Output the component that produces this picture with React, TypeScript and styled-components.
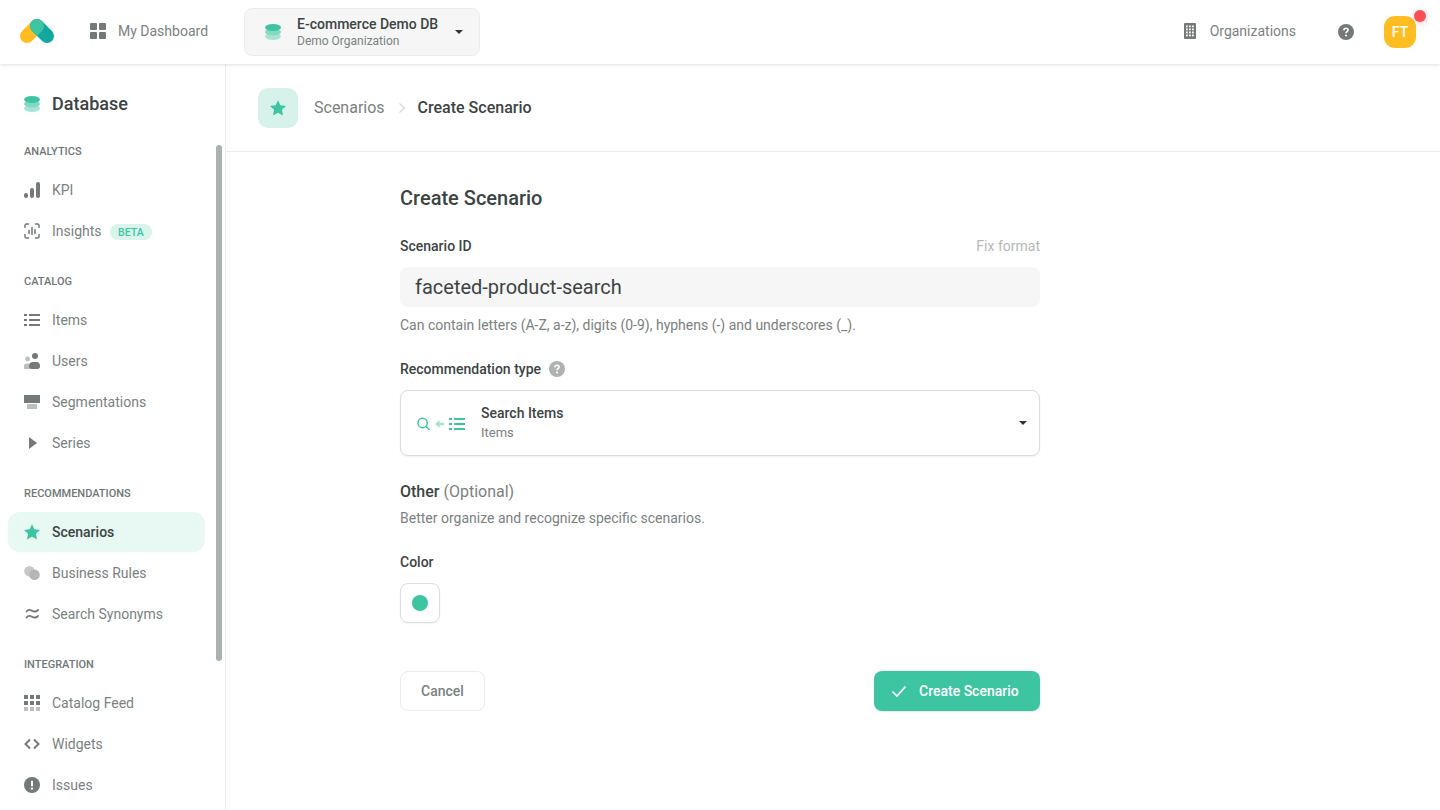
import React from 'react';
import styled, { createGlobalStyle } from 'styled-components';

const GlobalStyle = createGlobalStyle`
  html, body {
    margin: 0;
    height: 100%;
    overflow: hidden;
    background: #fff;
    font-family: Roboto, 'Liberation Sans', sans-serif;
    color: #3c4443;
    -webkit-font-smoothing: antialiased;
  }
  * {
    box-sizing: border-box;
  }
`;

const Page = styled.div`
  height: 810px;
  display: flex;
  flex-direction: column;
  overflow: hidden;
`;

/* Top bar */
const TopBar = styled.header`
  position: relative;
  z-index: 2;
  flex: 0 0 64px;
  height: 64px;
  display: flex;
  align-items: center;
  padding: 0 24px 0 20px;
  background: #fff;
  box-shadow: 0 1px 3px rgba(0, 0, 0, 0.12);
`;

const TopLink = styled.div<{ $gap: number }>`
  display: flex;
  align-items: center;
  gap: ${(p) => p.$gap}px;
  margin-bottom: 2px;
  font-size: 14px;
  color: #7a8280;
`;

const DashLink = styled(TopLink)`
  margin-left: 36px;
`;

const DbSwitch = styled.div`
  margin-left: 36px;
  width: 236px;
  height: 48px;
  display: flex;
  align-items: center;
  padding: 0 16px 0 20px;
  background: #f6f6f6;
  border: 1px solid #ececec;
  border-radius: 8px;
`;

const DbText = styled.div`
  margin-left: 16px;
  flex: 1;
  display: flex;
  flex-direction: column;
  gap: 1px;
`;

const DbName = styled.div`
  font-size: 14px;
  line-height: 17px;
  font-weight: 500;
  color: #3c4443;
`;

const DbOrg = styled.div`
  font-size: 12px;
  line-height: 15px;
  color: #7a8280;
`;

const Caret = styled.span`
  width: 0;
  height: 0;
  border-left: 4.5px solid transparent;
  border-right: 4.5px solid transparent;
  border-top: 4.5px solid #2f3635;
`;

const TopRight = styled.div`
  margin-left: auto;
  display: flex;
  align-items: center;
`;

const HelpButton = styled.div`
  margin-left: 42px;
  display: flex;
`;

const Avatar = styled.div`
  position: relative;
  margin-left: 30px;
  width: 32px;
  height: 32px;
  display: flex;
  align-items: center;
  justify-content: center;
  border-radius: 11px;
  background: #ffbd21;
  color: #fff;
  font-size: 14px;
  font-weight: 500;
`;

const Badge = styled.span`
  position: absolute;
  top: -6px;
  right: -10px;
  width: 12px;
  height: 12px;
  border-radius: 50%;
  background: #ff4d54;
  box-shadow: 0 2px 6px rgba(255, 77, 84, 0.3);
`;

/* Layout */
const Body = styled.div`
  flex: 1;
  display: flex;
  min-height: 0;
`;

const Sidebar = styled.aside`
  position: relative;
  flex: 0 0 226px;
  padding: 0 8px;
  border-right: 1px solid #ececec;
  overflow: hidden;
`;

const Scrollbar = styled.div`
  position: absolute;
  top: 81px;
  left: 216px;
  width: 6px;
  height: 516px;
  border-radius: 3px;
  background: #a9b2af;
`;

const SideTitle = styled.div`
  height: 80px;
  display: flex;
  align-items: center;
  gap: 12px;
  padding-left: 16px;
`;

const SideName = styled.span`
  margin-bottom: 2px;
  font-size: 18px;
  font-weight: 500;
  color: #3c4443;
`;

const Group = styled.div`
  margin-bottom: 23px;
`;

const GroupLabel = styled.div`
  height: 14px;
  margin-bottom: 12px;
  padding-left: 16px;
  display: flex;
  align-items: center;
  font-size: 11px;
  font-weight: 500;
  color: #6f7776;
`;

const NavRow = styled.div<{ $active?: boolean }>`
  width: 197px;
  height: 40px;
  margin-bottom: 1px;
  display: flex;
  align-items: center;
  gap: 12px;
  padding-left: 16px;
  border-radius: 12px;
  font-size: 14px;
  background: ${(p) => (p.$active ? '#e8f8f3' : 'transparent')};
  color: ${(p) => (p.$active ? '#3c4443' : '#7a8280')};
  font-weight: ${(p) => (p.$active ? 500 : 400)};
`;

const BetaTag = styled.span`
  margin: 2px 0 0 -4px;
  height: 16px;
  padding: 0 8.5px;
  display: flex;
  align-items: center;
  border-radius: 8px;
  background: #d9f4ec;
  color: #3dc5a2;
  font-size: 10.5px;
  font-weight: 500;
`;

/* Main column */
const Main = styled.main`
  flex: 1;
  min-width: 0;
`;

const Crumbs = styled.div`
  height: 88px;
  display: flex;
  align-items: center;
  padding: 0 32px;
  border-bottom: 1px solid #ececec;
  font-size: 16px;
`;

const CrumbTile = styled.div`
  width: 40px;
  height: 40px;
  display: flex;
  align-items: center;
  justify-content: center;
  margin-right: 16px;
  border-radius: 10px;
  background: #d6f2ea;
`;

const CrumbLink = styled.span`
  color: #7a8280;
`;

const CrumbCurrent = styled.span`
  font-weight: 500;
  color: #3c4443;
`;

const CrumbSep = styled.span`
  display: flex;
  margin: 0 12px 0 13px;
`;

const Form = styled.form`
  width: 640px;
  margin-left: 174px;
  padding-top: 32px;
`;

const FormTitle = styled.h1`
  margin: 0;
  height: 28px;
  line-height: 28px;
  font-size: 20px;
  font-weight: 500;
  color: #3c4443;
`;

const LabelRow = styled.div<{ $top: number }>`
  margin-top: ${(p) => p.$top}px;
  height: 20px;
  display: flex;
  align-items: center;
  gap: 8px;
`;

const FieldLabel = styled.label`
  font-size: 14px;
  font-weight: 500;
  color: #3c4443;
`;

const FixFormat = styled.span`
  margin-left: auto;
  font-size: 14px;
  color: #b4b9b8;
`;

const TextInput = styled.div`
  margin-top: 11px;
  height: 40px;
  display: flex;
  align-items: center;
  padding: 0 15px;
  border-radius: 8px;
  background: #f6f6f6;
  font-size: 20px;
  color: #3c4443;
`;

const Hint = styled.div<{ $top: number }>`
  margin-top: ${(p) => p.$top}px;
  height: 20px;
  line-height: 20px;
  font-size: 14px;
  color: #7a8280;
`;

const Select = styled.div`
  margin-top: 11px;
  height: 66px;
  display: flex;
  align-items: center;
  padding: 0 12px 0 16px;
  border: 1px solid #d9dcdb;
  border-radius: 8px;
  box-shadow: 0 1px 2px rgba(0, 0, 0, 0.06);
`;

const SelectText = styled.div`
  margin-left: 15px;
  flex: 1;
  display: flex;
  flex-direction: column;
  gap: 2px;
  padding-bottom: 2px;
`;

const SelectName = styled.div`
  font-size: 14px;
  line-height: 18px;
  font-weight: 500;
  color: #3c4443;
`;

const SelectSub = styled.div`
  font-size: 13px;
  line-height: 17px;
  color: #7a8280;
`;

const SectionTitle = styled.div`
  margin-top: 26px;
  height: 20px;
  line-height: 20px;
  font-size: 16px;
  font-weight: 500;
  color: #3c4443;
`;

const Optional = styled.span`
  font-weight: 400;
  color: #7a8280;
`;

const Swatch = styled.div`
  margin-top: 11px;
  width: 40px;
  height: 40px;
  display: flex;
  align-items: center;
  justify-content: center;
  border: 1px solid #dcdfde;
  border-radius: 8px;
  box-shadow: 0 1px 2px rgba(0, 0, 0, 0.06);
`;

const SwatchDot = styled.span`
  width: 16px;
  height: 16px;
  border-radius: 50%;
  background: #3dc5a2;
`;

const Actions = styled.div`
  margin-top: 48px;
  display: flex;
  justify-content: space-between;
`;

const CancelButton = styled.button`
  width: 85px;
  height: 40px;
  border: 1px solid #ececec;
  border-radius: 8px;
  background: #fff;
  font-family: inherit;
  font-size: 14px;
  font-weight: 500;
  color: #7a8280;
`;

const SubmitButton = styled.button`
  width: 166px;
  height: 40px;
  display: flex;
  align-items: center;
  gap: 12px;
  padding: 0 0 0 17px;
  border: 0;
  border-radius: 8px;
  background: #3dc5a2;
  font-family: inherit;
  font-size: 14px;
  font-weight: 500;
  color: #fff;
  box-shadow: 0 1px 2px rgba(0, 0, 0, 0.1);
`;

const GREY = '#737a79';
const GREEN = '#3dc5a2';

const Svg: React.FC<{ size?: number; w?: number; h?: number; children: React.ReactNode }> = ({ size = 16, w, h, children }) => (
  <svg width={w ?? size} height={h ?? size} viewBox={`0 0 ${w ?? size} ${h ?? size}`} fill="none" style={{ flex: 'none' }}>
    {children}
  </svg>
);

const Logo = () => (
  <Svg w={34} h={26}>
    <path d="M7 17 17 7" stroke="#ffbd21" strokeWidth="14" strokeLinecap="round" />
    <path d="M27 17 17 7" stroke="#13a89e" strokeWidth="14" strokeLinecap="round" />
    <path d="M12.05 11.95 17 16.9 21.95 11.95A7 7 0 1 0 12.05 11.95Z" fill={GREEN} />
  </Svg>
);

const DbIcon = () => (
  <Svg>
    <ellipse cx="8" cy="12.5" rx="8" ry="3.5" fill="#a8e4d4" />
    <ellipse cx="8" cy="8" rx="8" ry="3.5" fill="#83d9c2" />
    <ellipse cx="8" cy="3.5" rx="8" ry="3.5" fill={GREEN} />
  </Svg>
);

const DashIcon = () => (
  <Svg>
    <rect x="0" y="0" width="7" height="7" rx="1" fill={GREY} />
    <rect x="9" y="0" width="7" height="7" rx="1" fill={GREY} />
    <rect x="0" y="9" width="7" height="7" rx="1" fill={GREY} />
    <rect x="9" y="9" width="7" height="7" rx="1" fill={GREY} />
  </Svg>
);

const KpiIcon = () => (
  <Svg>
    <rect x="0" y="11" width="4" height="5" rx="2" fill={GREY} />
    <rect x="6" y="6" width="4" height="10" rx="2" fill={GREY} />
    <rect x="12" y="0" width="4" height="16" rx="2" fill={GREY} />
  </Svg>
);

const InsightsIcon = () => (
  <Svg>
    <path d="M1 4.5V2.5A1.5 1.5 0 0 1 2.5 1H4.5M11.5 1H13.5A1.5 1.5 0 0 1 15 2.5V4.5M15 11.5V13.5A1.5 1.5 0 0 1 13.5 15H11.5M4.5 15H2.5A1.5 1.5 0 0 1 1 13.5V11.5" stroke={GREY} strokeWidth="1.5" strokeLinecap="round" />
    <path d="M5 7.5V10.5M8 4.5V11.5M11 6.5V10.5" stroke={GREY} strokeWidth="1.5" strokeLinecap="round" />
  </Svg>
);

const ListIcon: React.FC<{ color?: string }> = ({ color = GREY }) => (
  <Svg h={12}>
    <rect x="0" y="0" width="3" height="2" fill={color} />
    <rect x="5" y="0" width="11" height="2" fill={color} />
    <rect x="0" y="5" width="3" height="2" fill={color} />
    <rect x="5" y="5" width="11" height="2" fill={color} />
    <rect x="0" y="10" width="3" height="2" fill={color} />
    <rect x="5" y="10" width="11" height="2" fill={color} />
  </Svg>
);

const UsersIcon = () => (
  <Svg>
    <circle cx="3.6" cy="6" r="2.4" fill="#bcc0bf" />
    <path d="M0 16V13A2.5 2.5 0 0 1 2.5 10.5H7V16Z" fill="#bcc0bf" />
    <circle cx="11" cy="3" r="3" fill={GREY} />
    <path d="M5 13.2C5 10.5 7 9 8.5 9H13C14.8 9 16 10.8 16 13V13.5C16 15 15 16 13.5 16H8C6 16 5 15 5 13.2Z" fill={GREY} />
  </Svg>
);

const SegmentIcon = () => (
  <Svg h={14}>
    <rect x="0" y="0" width="16" height="8" fill={GREY} />
    <rect x="3" y="9" width="10" height="5" fill="#bcc0bf" />
  </Svg>
);

const PlayIcon = () => (
  <Svg>
    <path d="M5 2 L13 8 L5 14 Z" fill={GREY} />
  </Svg>
);

const StarIcon: React.FC<{ size?: number }> = ({ size = 16 }) => (
  <svg width={size} height={size} viewBox="0 0 16 16" style={{ flex: 'none' }}>
    <path d="M8 .2 10.4 5.3 16 6 11.9 9.8 13 15.5 8 12.7 3 15.5 4.1 9.8 0 6 5.6 5.3Z" fill={GREEN} />
  </svg>
);

const RulesIcon = () => (
  <Svg>
    <circle cx="5.5" cy="6.3" r="5.3" fill="#c6c9c8" />
    <circle cx="10.5" cy="9.7" r="5.3" fill="#b3b7b6" />
  </Svg>
);

const SynonymIcon = () => (
  <Svg>
    <path d="M2.5 5.5C4 3.5 6 3.5 8 4.7C10 5.9 12 6 14 4M2.5 11.5C4 9.5 6 9.5 8 10.7C10 11.9 12 12 14 10" stroke={GREY} strokeWidth="1.8" strokeLinecap="round" />
  </Svg>
);

const FeedIcon = () => (
  <Svg>
    {[0, 6, 12].map((x) =>
      [0, 6, 12].map((y) => (
        <rect key={`${x}-${y}`} x={x} y={y} width="4" height="4" fill={y === 12 ? '#bcc0bf' : GREY} />
      ))
    )}
  </Svg>
);

const CodeIcon = () => (
  <Svg h={12}>
    <path d="M6 1.5 1.5 6 6 10.5M10 1.5 14.5 6 10 10.5" stroke={GREY} strokeWidth="2" />
  </Svg>
);

const IssueIcon = () => (
  <Svg>
    <circle cx="8" cy="8" r="8" fill={GREY} />
    <rect x="7" y="3.5" width="2" height="6" rx="1" fill="#fff" />
    <circle cx="8" cy="11.6" r="1.2" fill="#fff" />
  </Svg>
);

const BuildingIcon = () => (
  <Svg w={12} h={16}>
    <rect width="12" height="16" rx="1" fill={GREY} />
    {[2, 5, 8].map((x) =>
      [2.5, 5.5, 8.5, 11.5].map((y) => <rect key={`${x}-${y}`} x={x} y={y} width="1.8" height="1.8" fill="#fff" />)
    )}
  </Svg>
);

const QuestionIcon: React.FC<{ color: string }> = ({ color }) => (
  <Svg>
    <circle cx="8" cy="8" r="8" fill={color} />
    <path d="M5.9 6.2C5.9 5 6.8 4.2 8 4.2S10.1 5 10.1 6.1C10.1 7.5 8 7.6 8 9.2" stroke="#fff" strokeWidth="1.6" fill="none" />
    <circle cx="8" cy="11.5" r="1.05" fill="#fff" />
  </Svg>
);

const SearchItemsIcon = () => (
  <Svg w={49} h={14}>
    <circle cx="5.6" cy="7" r="4.7" stroke={GREEN} strokeWidth="1.5" />
    <path d="M9 10.4 12 13.2" stroke={GREEN} strokeWidth="1.5" strokeLinecap="round" />
    <path d="M18 8 22.5 4V6.8H27V9.2H22.5V12Z" fill="#a8e4d4" />
    <g transform="translate(32 2)">
      <ListIcon color={GREEN} />
    </g>
  </Svg>
);

const CheckIcon = () => (
  <Svg>
    <path d="M1.5 8.5 6 13 14.5 3.5" stroke="#fff" strokeWidth="1.7" />
  </Svg>
);

const nav = [
  {
    label: 'ANALYTICS',
    rows: [
      { name: 'KPI', icon: <KpiIcon /> },
      { name: 'Insights', icon: <InsightsIcon />, beta: true },
    ],
  },
  {
    label: 'CATALOG',
    rows: [
      { name: 'Items', icon: <ListIcon /> },
      { name: 'Users', icon: <UsersIcon /> },
      { name: 'Segmentations', icon: <SegmentIcon /> },
      { name: 'Series', icon: <PlayIcon /> },
    ],
  },
  {
    label: 'RECOMMENDATIONS',
    rows: [
      { name: 'Scenarios', icon: <StarIcon />, active: true },
      { name: 'Business Rules', icon: <RulesIcon /> },
      { name: 'Search Synonyms', icon: <SynonymIcon /> },
    ],
  },
  {
    label: 'INTEGRATION',
    rows: [
      { name: 'Catalog Feed', icon: <FeedIcon /> },
      { name: 'Widgets', icon: <CodeIcon /> },
      { name: 'Issues', icon: <IssueIcon /> },
    ],
  },
];

const App: React.FC = () => (
  <>
    <GlobalStyle />
    <Page>
      <TopBar>
        <Logo />
        <DashLink $gap={12}>
          <DashIcon />
          My Dashboard
        </DashLink>
        <DbSwitch>
          <DbIcon />
          <DbText>
            <DbName>E-commerce Demo DB</DbName>
            <DbOrg>Demo Organization</DbOrg>
          </DbText>
          <Caret />
        </DbSwitch>
        <TopRight>
          <TopLink $gap={14}>
            <BuildingIcon />
            Organizations
          </TopLink>
          <HelpButton>
            <QuestionIcon color={GREY} />
          </HelpButton>
          <Avatar>
            FT
            <Badge />
          </Avatar>
        </TopRight>
      </TopBar>
      <Body>
        <Sidebar>
          <SideTitle>
            <DbIcon />
            <SideName>Database</SideName>
          </SideTitle>
          {nav.map((group) => (
            <Group key={group.label}>
              <GroupLabel>{group.label}</GroupLabel>
              {group.rows.map((row) => (
                <NavRow key={row.name} $active={row.active}>
                  {row.icon}
                  {row.name}
                  {row.beta && <BetaTag>BETA</BetaTag>}
                </NavRow>
              ))}
            </Group>
          ))}
          <Scrollbar />
        </Sidebar>
        <Main>
          <Crumbs>
            <CrumbTile>
              <StarIcon />
            </CrumbTile>
            <CrumbLink>Scenarios</CrumbLink>
            <CrumbSep>
              <Svg w={8} h={12}>
                <path d="M1.5 1.5 6.5 6 1.5 10.5" stroke="#d5d8d7" strokeWidth="1.2" />
              </Svg>
            </CrumbSep>
            <CrumbCurrent>Create Scenario</CrumbCurrent>
          </Crumbs>
          <Form>
            <FormTitle>Create Scenario</FormTitle>
            <LabelRow $top={24}>
              <FieldLabel>Scenario ID</FieldLabel>
              <FixFormat>Fix format</FixFormat>
            </LabelRow>
            <TextInput>faceted-product-search</TextInput>
            <Hint $top={8}>Can contain letters (A-Z, a-z), digits (0-9), hyphens (-) and underscores (_).</Hint>
            <LabelRow $top={24}>
              <FieldLabel>Recommendation type</FieldLabel>
              <QuestionIcon color="#aeb3b2" />
            </LabelRow>
            <Select>
              <SearchItemsIcon />
              <SelectText>
                <SelectName>Search Items</SelectName>
                <SelectSub>Items</SelectSub>
              </SelectText>
              <Caret />
            </Select>
            <SectionTitle>
              Other <Optional>(Optional)</Optional>
            </SectionTitle>
            <Hint $top={6}>Better organize and recognize specific scenarios.</Hint>
            <LabelRow $top={24}>
              <FieldLabel>Color</FieldLabel>
            </LabelRow>
            <Swatch>
              <SwatchDot />
            </Swatch>
            <Actions>
              <CancelButton type="button">Cancel</CancelButton>
              <SubmitButton type="button">
                <CheckIcon />
                Create Scenario
              </SubmitButton>
            </Actions>
          </Form>
        </Main>
      </Body>
    </Page>
  </>
);

export default App;
